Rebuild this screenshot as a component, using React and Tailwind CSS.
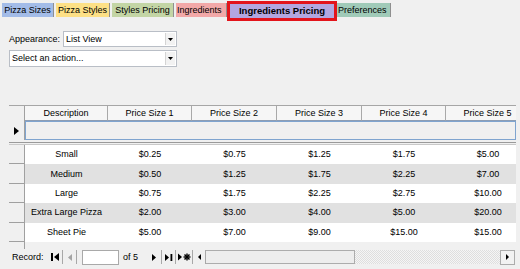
import React from "react";

const rows = [
  ["Small", "$0.25", "$0.75", "$1.25", "$1.75", "$5.00"],
  ["Medium", "$0.50", "$1.25", "$1.75", "$2.25", "$7.00"],
  ["Large", "$0.75", "$1.75", "$2.25", "$2.75", "$10.00"],
  ["Extra Large Pizza", "$2.00", "$3.00", "$4.00", "$5.00", "$20.00"],
  ["Sheet Pie", "$5.00", "$7.00", "$9.00", "$15.00", "$15.00"],
];

const colW = ["w-[83px]", "w-[84px]", "w-[85px]", "w-[85px]", "w-[84px]", "w-[84px]"];
const headers = ["Description", "Price Size 1", "Price Size 2", "Price Size 3", "Price Size 4", "Price Size 5"];

function Tab({ className, children }) {
  return (
    <div className={"mt-[3px] h-[14px] shrink-0 flex items-center justify-center border-r border-[#8f8f8f] " + className}>
      {children}
    </div>
  );
}

function Tabs() {
  return (
    <div className="h-[22px] flex items-start pl-[2px]">
      <Tab className="w-[52px] bg-[#a3bce8]">Pizza Sizes</Tab>
      <Tab className="ml-[2px] w-[54px] bg-[#fde086]">Pizza Styles</Tab>
      <Tab className="ml-[2px] w-[62px] bg-[#c3d5a5]">Styles Pricing</Tab>
      <Tab className="ml-[2px] w-[51px] bg-[#f2a8a8] justify-start pl-[1px]">Ingredients</Tab>
      <div className="mt-[1px] w-[110px] h-[20px] shrink-0 border-[3px] border-[#e3141b]">
        <div className="h-full bg-[#b3a7e0] flex items-center justify-center font-bold text-[9.5px]">
          Ingredients Pricing
        </div>
      </div>
      <Tab className="w-[54px] bg-[#a0cab8] justify-start pl-[1px]">Preferences</Tab>
    </div>
  );
}

function Combo({ className, text }) {
  return (
    <div className={"flex bg-white border border-[#b9bec6] " + className}>
      <div className="flex-1 flex items-center pl-[2px]">{text}</div>
      <div className="w-[10px] my-[1px] mr-[1px] flex items-center justify-center bg-[#f2f2f2] border-l border-[#d4d4d4]">
        <svg width="5" height="3" viewBox="0 0 5 3">
          <path d="M0 0H5L2.5 3Z" fill="#000" />
        </svg>
      </div>
    </div>
  );
}

function Grid() {
  return (
    <div className="mt-[38px] ml-[9px] w-[507px] overflow-hidden">
      {/* header */}
      <div className="flex h-[16px] border-t border-[#a6a6a6]">
        <div className="w-[16px] shrink-0 border-r border-[#a0a0a0] bg-[#f0f0f0]" />
        {headers.map((h, i) => (
          <div
            key={h}
            className={
              colW[i] +
              " shrink-0 flex items-center justify-center border-r border-b border-r-[#a9a9a9] border-b-[#8d9db3] bg-[#f6f6f6]"
            }
          >
            {h}
          </div>
        ))}
      </div>
      {/* new record row */}
      <div className="flex h-[19px]">
        <div className="w-[16px] shrink-0 border-r border-[#a0a0a0] flex items-center justify-center">
          <svg width="5" height="8" viewBox="0 0 5 8">
            <path d="M0 0L5 4L0 8Z" fill="#000" />
          </svg>
        </div>
        <div className="flex-1 border border-[#7fa4cf] bg-[#f0f0f0]" />
      </div>
      {/* separator */}
      <div className="h-[5px] pt-[2px]">
        <div className="h-[3px] border-t border-b border-t-[#9a9a9a] border-b-[#c9c9c9]" />
      </div>
      {/* data rows */}
      {rows.map((r, ri) => (
        <div key={ri} className="flex h-[19.4px]">
          <div className="w-[16px] shrink-0 border-r border-b border-[#a0a0a0] bg-[#f0f0f0]" />
          {r.map((c, ci) => (
            <div
              key={ci}
              className={
                colW[ci] +
                " shrink-0 flex items-center justify-center " +
                (ri % 2 === 1 ? "bg-[#e1e1e1]" : "bg-white")
              }
            >
              {c}
            </div>
          ))}
        </div>
      ))}
      {/* filler */}
      <div className="flex h-[7px]">
        <div className="w-[16px] shrink-0 border-r border-[#a0a0a0]" />
      </div>
    </div>
  );
}

function NavBtn({ className, children }) {
  return (
    <div className={"h-[14px] shrink-0 flex items-center justify-center border-r border-[#a8a8a8] " + className}>
      {children}
    </div>
  );
}

function Nav() {
  return (
    <div className="h-[17px] flex items-center">
      <span className="ml-[12px] w-[31px] shrink-0">Record:</span>
      <NavBtn className="ml-[5px] w-[15px]">
        <svg width="9" height="8" viewBox="0 0 9 8">
          <rect x="0" y="0" width="2" height="8" fill="#000" />
          <path d="M8 0L3 4L8 8Z" fill="#000" />
        </svg>
      </NavBtn>
      <NavBtn className="w-[14px]">
        <svg width="4" height="7" viewBox="0 0 4 7">
          <path d="M4 0L0 3.5L4 7Z" fill="#a4a4a4" />
        </svg>
      </NavBtn>
      <div className="ml-[5px] w-[37px] h-[15px] shrink-0 bg-white border border-[#a9a9a9]" />
      <span className="ml-[4px] w-[16px] shrink-0">of 5</span>
      <NavBtn className="ml-[8px] w-[15px]">
        <svg width="4" height="7" viewBox="0 0 4 7">
          <path d="M0 0L4 3.5L0 7Z" fill="#000" />
        </svg>
      </NavBtn>
      <NavBtn className="w-[14px]">
        <svg width="8" height="7" viewBox="0 0 8 7">
          <path d="M0 0L4 3.5L0 7Z" fill="#000" />
          <rect x="5.5" y="0" width="1.8" height="7" fill="#000" />
        </svg>
      </NavBtn>
      <NavBtn className="w-[17px]">
        <svg width="13" height="8" viewBox="0 0 13 8">
          <path d="M0 0.5L4 4L0 7.5Z" fill="#000" />
          <g stroke="#000" strokeWidth="1.4">
            <line x1="9" y1="0.5" x2="9" y2="7.5" />
            <line x1="5.5" y1="4" x2="12.5" y2="4" />
            <line x1="6.5" y1="1.5" x2="11.5" y2="6.5" />
            <line x1="11.5" y1="1.5" x2="6.5" y2="6.5" />
          </g>
        </svg>
      </NavBtn>
      <NavBtn className="w-[13px]">
        <svg width="3" height="6" viewBox="0 0 3 6">
          <path d="M3 0L0 3L3 6Z" fill="#000" />
        </svg>
      </NavBtn>
      <div className="w-[149px] h-[14px] shrink-0 bg-[#ededed] border-t border-b border-r border-[#acacac]" />
      <div className="w-[145px] h-[14px] shrink-0 bg-[repeating-conic-gradient(#dedede_0_25%,#f5f5f5_0_50%)] bg-[length:2px_2px]" />
      <div className="w-[15px] h-[15px] shrink-0 flex items-center justify-center bg-[#f2f2f2] border border-[#acacac]">
        <svg width="3" height="6" viewBox="0 0 3 6">
          <path d="M0 0L3 3L0 6Z" fill="#000" />
        </svg>
      </div>
    </div>
  );
}

export default function App() {
  return (
    <div className="w-[520px] h-[269px] bg-[#f0f0f0] overflow-hidden font-['Liberation_Sans',Arial,sans-serif] text-[9px] leading-none text-black">
      <Tabs />
      <div className="mt-[9px] pl-[9px] flex items-center h-[16px]">
        <span className="w-[54px] shrink-0">Appearance:</span>
        <Combo className="w-[114px] h-[16px]" text="List View" />
      </div>
      <div className="mt-[3px] pl-[9px]">
        <Combo className="w-[168px] h-[17px]" text="Select an action..." />
      </div>
      <Grid />
      <Nav />
    </div>
  );
}
